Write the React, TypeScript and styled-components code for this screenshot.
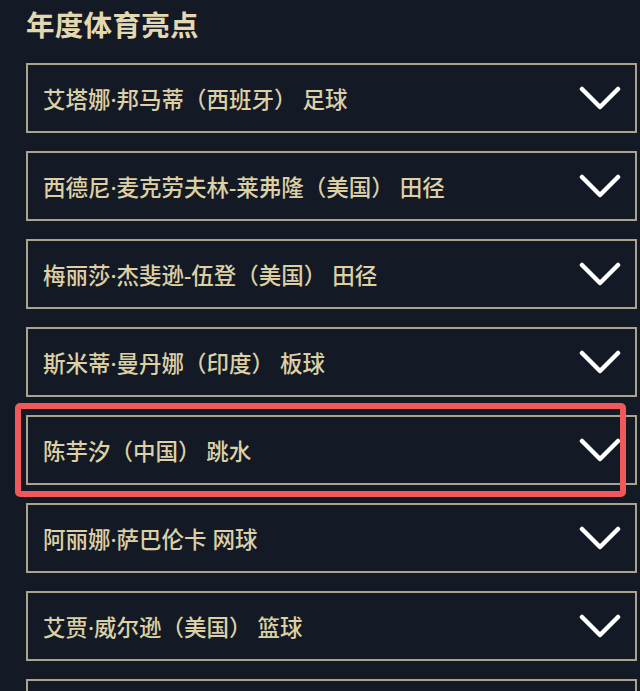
import React from "react";
import styled, { createGlobalStyle } from "styled-components";

const GlobalStyle = createGlobalStyle`
  html, body {
    margin: 0;
    padding: 0;
    background: #131a26;
    overflow: hidden;
  }
  body {
    font-family: "Noto Sans", "Noto Sans CJK SC", sans-serif;
  }
`;

const Page = styled.div`
  display: flex;
  flex-direction: column;
  padding: 8px 0 0 26px;
  min-height: 691px;
  box-sizing: border-box;
`;

const Title = styled.h1`
  margin: 0 0 21px 0;
  font-size: 28.5px;
  line-height: 34px;
  font-weight: 700;
  color: #e4d8b0;
  letter-spacing: 0.3px;
`;

const List = styled.div`
  display: flex;
  flex-direction: column;
  gap: 18px;
`;

const ItemWrap = styled.div`
  position: relative;
`;

const Item = styled.div`
  box-sizing: border-box;
  width: 611px;
  height: 70px;
  border: 2px solid #aaa38e;
  background: #131a26;
  display: flex;
  align-items: center;
  justify-content: space-between;
  padding: 0 14px 0 15px;
`;

const Label = styled.span`
  font-size: 22.5px;
  font-weight: 500;
  color: #ddd0a4;
  white-space: pre;
`;

const Highlight = styled.div`
  position: absolute;
  left: -11px;
  top: -12px;
  right: 14px;
  bottom: -12px;
  border: 6px solid #f2575a;
  border-radius: 5px;
  pointer-events: none;
`;

const Chevron = () => (
  <svg width="42" height="24" viewBox="0 0 42 24" fill="none">
    <polyline
      points="3,3 21,21 39,3"
      stroke="#ffffff"
      strokeWidth="4.5"
      strokeLinecap="round"
      strokeLinejoin="round"
    />
  </svg>
);

const items = [
  "艾塔娜·邦马蒂（西班牙） 足球",
  "西德尼·麦克劳夫林-莱弗隆（美国） 田径",
  "梅丽莎·杰斐逊-伍登（美国） 田径",
  "斯米蒂·曼丹娜（印度） 板球",
  "陈芋汐（中国） 跳水",
  "阿丽娜·萨巴伦卡 网球",
  "艾贾·威尔逊（美国） 篮球",
  "",
];

export default function App() {
  return (
    <>
      <GlobalStyle />
      <Page>
        <Title>年度体育亮点</Title>
        <List>
          {items.map((t, i) => (
            <ItemWrap key={i}>
              <Item>
                <Label>{t}</Label>
                <Chevron />
              </Item>
              {i === 4 && <Highlight />}
            </ItemWrap>
          ))}
        </List>
      </Page>
    </>
  );
}
